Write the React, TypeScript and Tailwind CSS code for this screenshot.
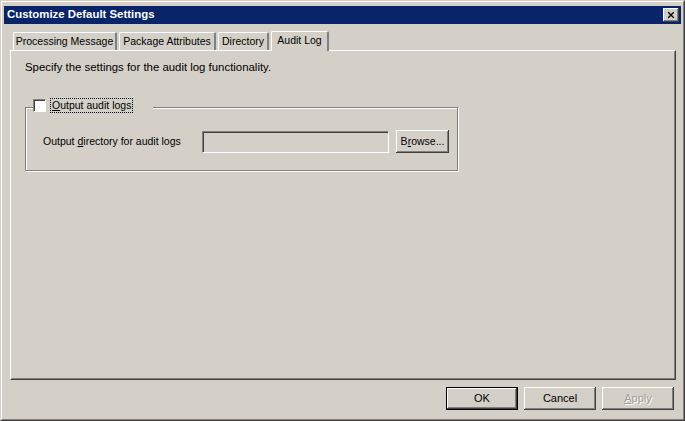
import { X } from 'lucide-react'

const font = { fontFamily: '"Liberation Sans", Arial, sans-serif' }

const raised = 'shadow-[inset_-1px_-1px_#404040,inset_1px_1px_#ffffff,inset_-2px_-2px_#808080,inset_2px_2px_#d4d0c8]'

function Button({ label, accel, isDefault, disabled }: { label: string; accel?: number; isDefault?: boolean; disabled?: boolean }) {
  const text = accel === undefined ? label : (
    <>
      {label.slice(0, accel)}
      <span className="underline underline-offset-1">{label[accel]}</span>
      {label.slice(accel + 1)}
    </>
  )
  return (
    <div
      className={`w-[72px] h-[23px] flex items-center justify-center text-[11px] bg-[#d4d0c8] ${
        isDefault ? 'border border-black' : ''
      } ${raised} ${disabled ? 'text-[#a09d98] [text-shadow:1px_1px_#ffffff]' : 'text-black'}`}
    >
      {text}
    </div>
  )
}

const tabs = [
  { label: 'Processing Message', w: 'w-[104px]' },
  { label: 'Package Attributes', w: 'w-[97px]' },
  { label: 'Directory', w: 'w-[51px]' },
  { label: 'Audit Log', w: 'w-[58px]' },
]

export default function App() {
  return (
    <div style={font} className="w-[685px] h-[421px] bg-[#d4d0c8] border border-[#d4d0c8] border-r-[#404040] border-b-[#404040] overflow-hidden">
      <div className="h-full border border-white border-r-[#808080] border-b-[#808080] px-[2px] pt-[3px] flex flex-col">
        {/* title bar */}
        <div className="h-[18px] mt-[1px] bg-[#0a246a] flex items-center justify-between pl-[3px] pr-[2px]">
          <span className="text-white font-bold text-[11.4px] leading-none">Customize Default Settings</span>
          <div className={`w-[16px] h-[14px] bg-[#d4d0c8] flex items-center justify-center ${raised}`}>
            <X className="w-[10px] h-[10px] text-black" strokeWidth={3.2} />
          </div>
        </div>

        {/* tabs */}
        <div className="flex items-end pl-[9px] mt-[6px] h-[20px] relative z-10 gap-[2px]">
          {tabs.map((t, i) => {
            const active = i === tabs.length - 1
            return (
              <div
                key={t.label}
                className={`${t.w} text-[10.5px] text-black border-l border-t border-white border-r-2 border-r-[#808080] rounded-t-[2px] bg-[#d4d0c8] flex items-center justify-center ${
                  active ? 'h-[20px] -mb-[1px] pb-[2px]' : 'h-[18px]'
                }`}
              >
                {t.label}
              </div>
            )
          })}
        </div>

        {/* tab panel */}
        <div className="ml-[6px] mr-[5px] h-[330px] border border-white border-r-[#404040] border-b-[#404040]">
          <div className="h-full border border-transparent border-r-[#808080] border-b-[#808080] pl-[13px] pt-[7px] text-[10.5px] text-black">
            <div className="text-[11.4px]">Specify the settings for the audit log functionality.</div>

            {/* group box */}
            <div className="relative mt-[31px] w-[433px] h-[64px] border border-[#808080] shadow-[1px_1px_#ffffff,inset_1px_1px_#ffffff]">
              <div className="absolute -top-[10px] left-[7px] flex items-center bg-[#d4d0c8] pr-[20px]">
                <div className="w-[13px] h-[13px] bg-white border border-[#808080] border-r-white border-b-white shadow-[inset_1px_1px_#404040]" />
                <span className="ml-[4px] px-[1px] border border-dotted border-black leading-[13px]">
                  <span className="underline underline-offset-1">O</span>utput audit logs
                </span>
              </div>
              <div className="flex items-center pl-[17px] pt-[23px]">
                <span className="w-[159px]">
                  Output <span className="underline underline-offset-1">d</span>irectory for audit logs
                </span>
                <div className="w-[187px] h-[22px] bg-[#d4d0c8] border border-[#808080] border-r-white border-b-white shadow-[inset_1px_1px_#404040]" />
                <div className={`ml-[7px] w-[53px] h-[23px] flex items-center justify-center -mt-[1px] ${raised}`}>
                  B<span className="underline underline-offset-1">r</span>owse...
                </div>
              </div>
            </div>
          </div>
        </div>

        {/* buttons */}
        <div className="flex justify-end gap-[6px] mt-[7px] mr-[7px]">
          <Button label="OK" isDefault />
          <Button label="Cancel" />
          <Button label="Apply" accel={0} disabled />
        </div>
      </div>
    </div>
  )
}
